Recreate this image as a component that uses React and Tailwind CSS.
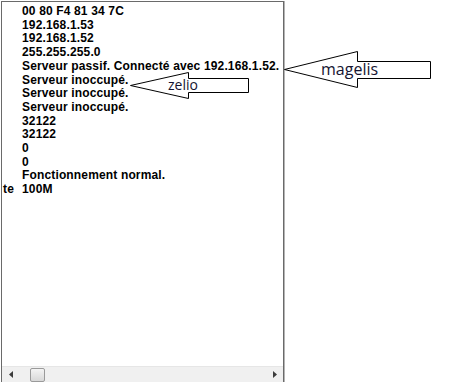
import React from 'react';

const rows = [
  ['', '00 80 F4 81 34 7C'],
  ['', '192.168.1.53'],
  ['', '192.168.1.52'],
  ['', '255.255.255.0'],
  ['', 'Serveur passif. Connecté avec 192.168.1.52.'],
  ['', 'Serveur inoccupé.'],
  ['', 'Serveur inoccupé.'],
  ['', 'Serveur inoccupé.'],
  ['', '32122'],
  ['', '32122'],
  ['', '0'],
  ['', '0'],
  ['', 'Fonctionnement normal.'],
  ['te', '100M'],
];

const ScrollBar = () => (
  <div className="h-[16px] flex items-center bg-[#f0f0f0] border-t border-[#e6e6e6]">
    <div className="w-[17px] h-full flex items-center justify-center">
      <svg width="4" height="7" viewBox="0 0 4 7">
        <polygon points="4,0 0,3.5 4,7" fill="#3c3c3c" />
      </svg>
    </div>
    <div className="flex-1 h-full flex items-end">
      <div className="ml-[11px] w-[15px] h-[14px] rounded-[2px] border border-[#9a9a9a] bg-gradient-to-b from-[#f4f4f4] to-[#d8d8d8]" />
    </div>
    <div className="w-[17px] h-full flex items-center justify-center">
      <svg width="4" height="7" viewBox="0 0 4 7">
        <polygon points="0,0 4,3.5 0,7" fill="#3c3c3c" />
      </svg>
    </div>
  </div>
);

const Callouts = () => (
  <svg className="absolute inset-0 pointer-events-none" width="458" height="382" viewBox="0 0 458 382">
    <polygon
      points="284.5,69.5 357.5,51.5 357.5,61.5 430.5,61.5 430.5,78.5 357.5,78.5 357.5,87.5"
      fill="white"
      stroke="#000"
      strokeWidth="1"
    />
    <text x="321" y="75" fontFamily="'Open Sans', sans-serif" fontSize="16" fill="#141430">magelis</text>
    <polygon
      points="130.5,85.5 188.5,72.5 188.5,78.5 248.5,78.5 248.5,92.5 188.5,92.5 188.5,98.5"
      fill="white"
      stroke="#000"
      strokeWidth="1"
    />
    <text x="168" y="90" fontFamily="'Open Sans', sans-serif" fontSize="14" fill="#141430">zelio</text>
  </svg>
);

export default function App() {
  return (
    <div className="relative w-[458px] h-[382px] bg-white overflow-hidden">
      <div className="ml-[1px] mt-[1px] w-[283px] h-[381px] flex flex-col border-l border-t border-r border-[#6a6a6a] shadow-[1px_0_0_#b4b4b4]">
        <div className="flex-1 pt-[3px] font-['Liberation_Sans',Arial,sans-serif] font-bold text-[12px] tracking-[0.15px] leading-[13.7px] text-black">
          {rows.map((r, i) => (
            <div key={i} className="flex whitespace-nowrap">
              <div className="w-[20px] pl-[1px]">{r[0]}</div>
              <div>{r[1]}</div>
            </div>
          ))}
        </div>
        <ScrollBar />
      </div>
      <Callouts />
    </div>
  );
}
